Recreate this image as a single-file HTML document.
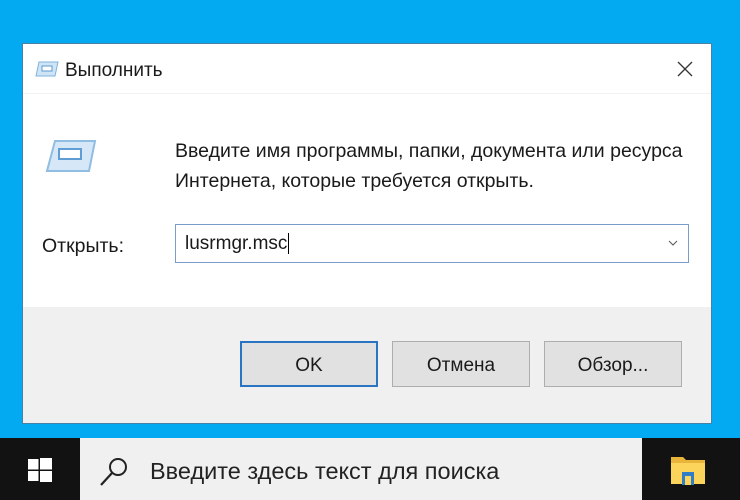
<!DOCTYPE html>
<html><head><meta charset="utf-8"><style>
*{margin:0;padding:0;box-sizing:border-box}
body{width:740px;height:500px;background:#03a9f1;position:relative;overflow:hidden;font-family:"Liberation Sans","DejaVu Sans",sans-serif;color:#1a1a1a}
.dlg{position:absolute;left:22px;top:43px;width:690px;height:381px;background:#fff;border:1px solid #4a7fa6}
.gray{position:absolute;left:0;right:0;top:263px;bottom:0;background:#f0f0f0}
.sep{position:absolute;left:0;right:0;top:49px;height:1px;background:#f2f2f2}
.t{position:absolute;white-space:nowrap;font-size:19.5px}
.inp{position:absolute;left:152px;top:180px;width:514px;height:39px;border:1px solid #7a9cc9;background:#fff}
.btn{position:absolute;top:297px;width:138px;height:46px;background:#e1e1e1;border:1px solid #adadad;font-size:19px;text-align:center;line-height:47px}
.task{position:absolute;left:0;top:438px;width:740px;height:62px;background:#121212}
.search{position:absolute;left:80px;top:438px;width:562px;height:62px;background:#f0f0f0}
</style></head><body>
<div class="dlg">
 <div class="sep"></div>
 <svg style="position:absolute;left:12px;top:17px" width="24" height="16" viewBox="0 0 24 16"><polygon points="4,1 23,1 20,15 1,15" fill="#cfe4f5" stroke="#7fb3dd"/><rect x="7" y="5" width="10" height="5" fill="#fff" stroke="#5a9ad0"/></svg>
 <div class="t" style="left:42px;top:16px;font-size:19px">Выполнить</div>
 <svg style="position:absolute;left:653px;top:16px" width="18" height="18" viewBox="0 0 18 18"><path d="M2 2L16 16M16 2L2 16" stroke="#333" stroke-width="1.3"/></svg>
 <svg style="position:absolute;left:22px;top:95px" width="52" height="34" viewBox="0 0 52 34"><polygon points="10,2 50,2 44,32 2,32" fill="#d6e8f7" stroke="#8fbde3" stroke-width="2"/><rect x="14" y="10" width="22" height="10" fill="#fff" stroke="#5f9dd4" stroke-width="2"/></svg>
 <div class="t" style="left:152px;top:92px;line-height:30px">Введите имя программы, папки, документа или ресурса<br>Интернета, которые требуется открыть.</div>
 <div class="t" style="left:19px;top:191px">Открыть:</div>
 <div class="inp"><div class="t" style="left:9px;top:8px;font-size:19px">lusrmgr.msc<span style="border-left:1px solid #000;margin-left:1px"></span></div>
  <svg style="position:absolute;left:492px;top:15px" width="10" height="7" viewBox="0 0 10 7"><path d="M1 1L5 5L9 1" stroke="#555" fill="none"/></svg></div>
 <div class="gray"></div>
 <div class="btn" style="left:217px;border:2px solid #2a74c4;line-height:45px">OK</div>
 <div class="btn" style="left:369px">Отмена</div>
 <div class="btn" style="left:521px">Обзор...</div>
</div>
<div class="task"></div>
<svg style="position:absolute;left:28px;top:458px" width="24" height="24" viewBox="0 0 24 24" fill="#fff"><rect x="0" y="1" width="10.5" height="10.5"/><rect x="12" y="0" width="12" height="11.5"/><rect x="0" y="13" width="10.5" height="10"/><rect x="12" y="13" width="12" height="11"/></svg>
<div class="search"></div>
<svg style="position:absolute;left:98px;top:455px" width="32" height="32" viewBox="0 0 32 32"><circle cx="20" cy="12" r="8" stroke="#222" stroke-width="2" fill="none"/><path d="M14 18L3 30" stroke="#222" stroke-width="2.2"/></svg>
<div class="t" style="left:150px;top:458px;font-size:23.5px;color:#222">Введите здесь текст для поиска</div>
<svg style="position:absolute;left:670px;top:455px" width="36" height="30" viewBox="0 0 36 30"><path d="M1 2h12l3 3h19v24H1z" fill="#e8b53a"/><rect x="1" y="8" width="34" height="21" fill="#fcd45c"/><rect x="12" y="17" width="12" height="13" fill="#2f7dc4"/><rect x="15" y="21" width="6" height="9" fill="#fcd45c"/></svg>
</body></html>
